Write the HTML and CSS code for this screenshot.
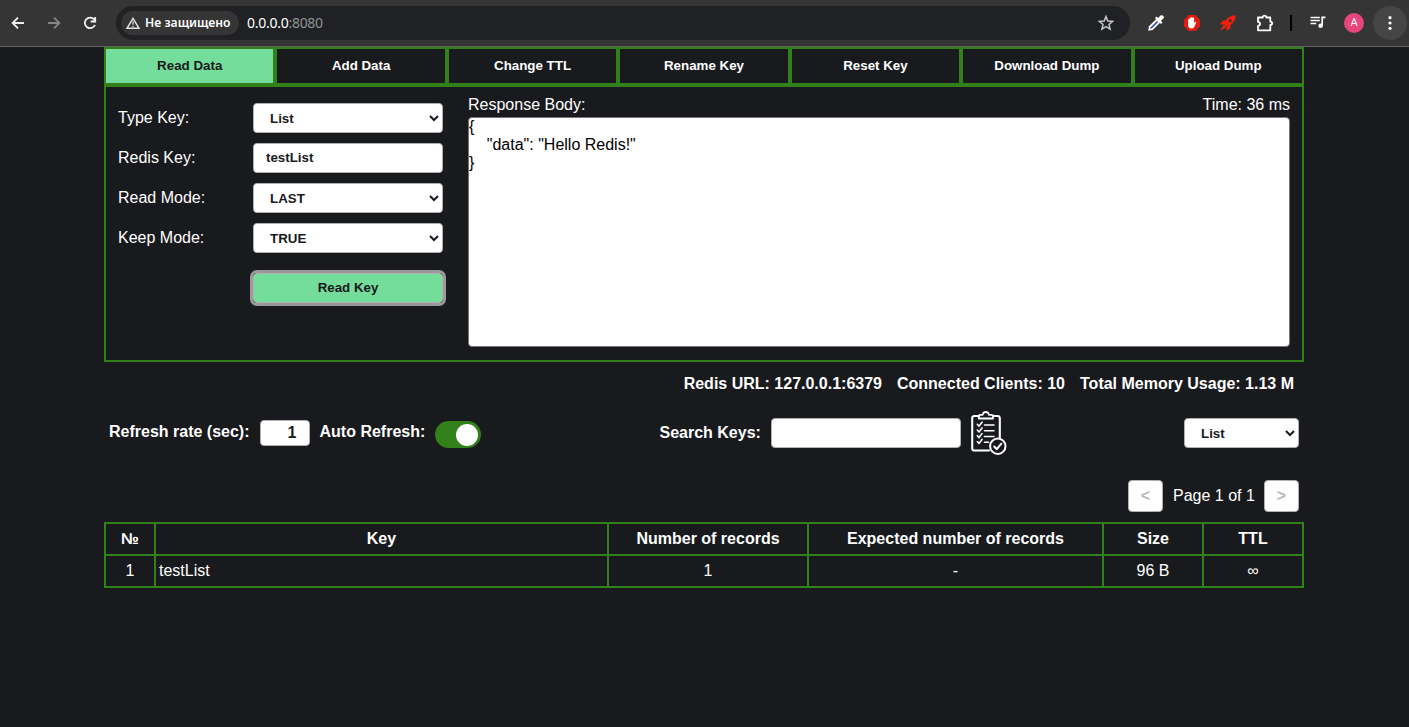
FILE: index.html
```html
<!DOCTYPE html>
<html lang="en">
<head>
<meta charset="utf-8">
<title>Redis</title>
<link rel="stylesheet" href="styles.css">
</head>
<body>
<header class="browser">
  <div class="nav-buttons">
    <svg class="nav-icon" viewBox="0 0 16 16"><path d="M14 8H3M8 2.600 2.600 8 8 13.400"/></svg>
    <svg class="nav-icon nav-icon-dim" viewBox="0 0 16 16"><path d="M2 8h11M8 2.600 13.400 8 8 13.400"/></svg>
    <svg class="nav-icon" viewBox="0 0 16 16"><path d="M13 10a5.300 5.300 0 1 1-.8-5.500L13.300 6M13.200 2v4.500H8.700"/></svg>
  </div>
  <div class="address">
    <span class="security">
      <svg class="warn" viewBox="0 0 14 12"><path d="M7 1.400 13 11.300H1Z" fill="none" stroke="#e3e3e3" stroke-width="1.400"/><path d="M7 4.500v3.300M7 8.700v1.300" stroke="#e3e3e3" stroke-width="1.300"/></svg>
      <span class="security-text">Не защищено</span>
    </span>
    <span class="url">0.0.0.0<span class="port">:8080</span></span>
    <svg class="star" viewBox="0 0 16 16"><path d="M8 1.500 9.800 6l4.900.4L11 9.500l1.100 4.700L8 11.700l-4.100 2.500L5 9.500 1.300 6.400 6.200 6Z" fill="none" stroke="#c7c7c7" stroke-width="1.500"/></svg>
  </div>
  <div class="extensions">
    <svg class="ext" viewBox="0 0 16 16"><path d="M9 3.300 1 11.300.2 15.800l4.500-.8 8-8Z" fill="#fff"/><path d="M8.900 6 2.700 12.200l-.4 1.500 1.600-.3L10.100 7.200Z" fill="#3f51b5"/><path d="m7 3 1.500-1.500 1.800 1.500L12.400.6c2-1.500 4.600 1 3 3l-2.400 2.100 1.500 1.800-1.500 1.500Z" fill="#fff"/></svg>
    <svg class="ext" viewBox="0 0 16 16"><path d="M4.700 0h6.600L16 4.700v6.600L11.300 16H4.700L0 11.300V4.700Z" fill="#e21b12"/><path d="M4.200 8.500V4.600q.7-1 1.400 0V3q.8-.9 1.500 0v-.5q.8-.8 1.500 0V3q.8-.8 1.500 0v5.300l1-1.300q1.200-.5 1.100.5l-2 4.500q-.9 1.600-2.600 1.600-3.400 0-3.400-3Z" fill="#fff"/></svg>
    <svg class="ext" viewBox="0 0 16 16"><path d="M15.800.2C10.800.5 7.900 2.300 6 5.200L2.500 5.800.2 9.500l3.500-.4-1 2.400L.2 15.800l4.500-2.600 2.100-.8-.4 3.300 3.800-2.200.4-3.600C13.600 7.600 15.700 4.500 15.800.2Z" fill="#f5200b"/><circle cx="10.300" cy="5.700" r="1.500" fill="#353535"/><path d="m3.500 12 2.300-2.200M5.500 13l2-1.800" stroke="#353535" stroke-width=".8"/></svg>
    <svg class="ext puzzle" viewBox="0 0 18 18"><path d="M2 3.500h4.700C6.700 1 10.300 1 10.300 3.500h4V7.700c2.500 0 2.500 3.300 0 3.300v5.300H2v-4.500c2.700 0 2.700-4 0-4Z" fill="none" stroke="#fff" stroke-width="1.800" stroke-linejoin="round"/></svg>
    <span class="divider"></span>
    <svg class="ext" viewBox="0 0 16 16"><path d="M.5 2.500h9.300M.5 5.500h9.300M.5 8.500h5.700M12.200 10.500V2.400h3.300" fill="none" stroke="#fff" stroke-width="1.700"/><circle cx="10.600" cy="10.700" r="2.300" fill="#fff"/></svg>
    <span class="avatar">A</span>
  </div>
  <span class="menu"><svg class="dots" viewBox="0 0 4 16"><circle cx="2" cy="2.700" r="1.600"/><circle cx="2" cy="8" r="1.600"/><circle cx="2" cy="13.300" r="1.600"/></svg></span>
</header>
<main class="app">
  <nav class="tabs">
    <button class="tab tab-active">Read Data</button>
    <button class="tab">Add Data</button>
    <button class="tab">Change TTL</button>
    <button class="tab">Rename Key</button>
    <button class="tab">Reset Key</button>
    <button class="tab">Download Dump</button>
    <button class="tab">Upload Dump</button>
  </nav>
  <section class="panel">
    <div class="form">
      <label class="label">Type Key:</label><select class="field"><option>List</option></select>
      <label class="label">Redis Key:</label><input class="field text-field" value="testList">
      <label class="label">Read Mode:</label><select class="field"><option>LAST</option></select>
      <label class="label">Keep Mode:</label><select class="field"><option>TRUE</option></select>
      <button class="read-key">Read Key</button>
    </div>
    <div class="response">
      <div class="response-head"><span>Response Body:</span><span>Time: 36 ms</span></div>
      <textarea class="body-text">{
    "data": "Hello Redis!"
}</textarea>
    </div>
  </section>
  <div class="stats"><span>Redis URL: 127.0.0.1:6379</span><span>Connected Clients: 10</span><span>Total Memory Usage: 1.13 M</span></div>
  <div class="toolbar">
    <div class="refresh">
      <label class="refresh-label">Refresh rate (sec):</label><input class="rate" value="1"><label class="refresh-label">Auto Refresh:</label><span class="toggle"><span class="knob"></span></span>
    </div>
    <div class="search">
      <label>Search Keys:</label><input class="field">
      <svg class="clipboard" viewBox="0 0 36 45" fill="none" stroke="#fff" stroke-linecap="round" stroke-linejoin="round">
        <path d="M8 5H3.500Q1.200 5 1.200 7.300V37.200Q1.200 39.500 3.500 39.500H18M22 5h4.500Q28.800 5 28.800 7.300V26.500" stroke-width="2.100"/>
        <path d="M7.800 7.500V5q0-1.200 1.500-1.200h2.300q.8-2.800 3.200-2.800T18 3.800h2.500Q22 3.800 22 5v2.500Z" stroke-width="1.800"/>
        <path d="m6.300 13.300 1.700 1.900 3-4M6.300 19l1.700 1.900 3-4M6.300 24.700l1.700 1.900 3-4M6.300 30.500l1.700 1.900 3-4M13.500 14H23M13.500 19.700H23M13.500 25.500H23M13.500 31.200h4" stroke-width="1.600"/>
        <circle cx="26.800" cy="35.200" r="7.700" stroke-width="2"/><path d="m23.200 35.500 2.600 2.700 4.500-5.500" stroke-width="2"/>
      </svg>
    </div>
    <select class="field type-filter"><option>List</option></select>
  </div>
  <div class="pager"><button class="page-btn" disabled>&lt;</button><span class="page-label">Page 1 of 1</span><button class="page-btn" disabled>&gt;</button></div>
  <table class="keys">
    <colgroup><col class="c-num"><col class="c-key"><col class="c-records"><col class="c-expected"><col class="c-small"><col class="c-small"></colgroup>
    <tr><th>№</th><th>Key</th><th>Number of records</th><th>Expected number of records</th><th>Size</th><th>TTL</th></tr>
    <tr><td>1</td><td class="key-name">testList</td><td>1</td><td>-</td><td>96 B</td><td>∞</td></tr>
  </table>
</main>
</body>
</html>
```
FILE: styles.css
```css
* { box-sizing: border-box; }
body {
  margin: 0;
  height: 727px;
  overflow: hidden;
  background: #191a1d;
  color: #fff;
  font: 16px/18px "Liberation Sans", Arial, sans-serif;
}
.browser {
  display: flex;
  align-items: center;
  height: 47px;
  padding: 0 2px 0 10px;
  background: #353535;
  border-bottom: 1px solid #636363;
  font-family: "Noto Sans", sans-serif;
}
.nav-buttons { display: flex; gap: 20px; width: 106px; }
.nav-icon { width: 16px; height: 16px; fill: none; stroke: #f1f1f1; stroke-width: 1.8; }
.nav-icon-dim { stroke: #858585; }
.address {
  display: flex;
  align-items: center;
  width: 1014px;
  height: 34px;
  padding: 0 16px 0 5px;
  border-radius: 17px;
  background: #202124;
}
.security {
  display: flex;
  align-items: center;
  gap: 5px;
  width: 118px;
  height: 24px;
  padding-left: 5px;
  border-radius: 12px;
  background: #353535;
}
.warn { width: 14px; height: 12px; }
.security-text { font-size: 12.2px; font-weight: 600; white-space: nowrap; }
.url { flex: 1; padding-left: 8px; font-size: 14px; letter-spacing: -0.27px; }
.port { color: #8f9195; }
.star { width: 16px; height: 16px; }
.extensions { display: flex; align-items: center; padding-left: 18px; width: 243px; }
.ext { width: 16px; height: 16px; margin-right: 20px; flex: none; }
.puzzle { width: 18px; height: 18px; margin: 0 16px 0 0; }
.divider { width: 2px; height: 16px; margin-right: 18px; background: #000; flex: none; }
.avatar {
  width: 20px;
  height: 20px;
  margin-left: -2px;
  border-radius: 50%;
  background: #e8457c;
  font: 11px/20px Roboto, sans-serif;
  text-align: center;
  flex: none;
}
.menu {
  display: flex;
  align-items: center;
  justify-content: center;
  width: 34px;
  height: 34px;
  border-radius: 50%;
  background: #454545;
}
.dots { width: 4px; height: 16px; fill: #fff; }

.app { width: 1200px; margin-left: 104px; }
.tabs { display: grid; grid-template-columns: repeat(7, 1fr); height: 38px; }
.tab {
  padding: 0 0 2px;
  border: 2px solid #32801a;
  background: #191a1d;
  color: #fff;
  font: bold 13.333px "Liberation Sans", Arial, sans-serif;
}
.tab-active { background: #74dd9c; color: #191a1d; }
.panel {
  display: flex;
  gap: 25px;
  height: 277px;
  padding: 8px 12px 0;
  border: 2px solid #32801a;
}
.form {
  display: grid;
  grid-template-columns: 135px 190px;
  grid-auto-rows: 30px;
  row-gap: 10px;
  align-content: start;
  padding-top: 8px;
}
.label { align-self: center; }
.field {
  width: 190px;
  height: 30px;
  padding: 0 12px;
  border: 1px solid #b0b0b0;
  border-radius: 4px;
  background: #fff;
  color: #191a1d;
  font: bold 13.333px "Liberation Sans", Arial, sans-serif;
}
select.field { padding-right: 0; }
.text-field { padding-bottom: 2px; }
.read-key {
  grid-column: 2;
  height: 30px;
  margin-top: 10px;
  padding: 0 0 2px;
  border: 1px solid #b0b0b0;
  border-radius: 4px;
  outline: 3px solid #9a9a9a;
  background: #74dd9c;
  color: #191a1d;
  font: bold 13.333px "Liberation Sans", Arial, sans-serif;
}
.response { width: 822px; }
.response-head { display: flex; justify-content: space-between; height: 22px; padding-top: 1px; }
.body-text {
  display: block;
  width: 822px;
  height: 230px;
  padding: 0;
  border: 1px solid #767676;
  border-radius: 4px;
  background: #fff;
  color: #000;
  font: 16px/18px "Liberation Sans", Arial, sans-serif;
  resize: none;
}
.stats {
  display: flex;
  justify-content: flex-end;
  gap: 15px;
  padding: 13px 10px 0 0;
  font-weight: bold;
}
.toolbar {
  display: flex;
  align-items: center;
  height: 54px;
  margin-top: 13px;
  padding: 0 5px;
  font-weight: bold;
}
.refresh, .search { display: flex; align-items: center; gap: 10px; }
.refresh { width: 550.5px; }
.refresh-label { margin-bottom: 2px; }
.rate {
  width: 50px;
  height: 26px;
  padding: 0 12px 0 0;
  border: 1px solid #b0b0b0;
  border-radius: 4px;
  color: #191a1d;
  font: bold 16px "Liberation Sans", Arial, sans-serif;
  text-align: right;
}
.toggle {
  display: flex;
  align-items: center;
  justify-content: flex-end;
  width: 46px;
  height: 27px;
  margin-top: 3px;
  padding-right: 3px;
  border-radius: 14px;
  background: #32801a;
}
.knob { width: 22px; height: 22px; border-radius: 50%; background: #fff; }
.clipboard { width: 36px; height: 45px; }
.type-filter { width: 115px; margin-left: auto; }
.pager {
  display: flex;
  align-items: center;
  justify-content: flex-end;
  gap: 10px;
  height: 32px;
  margin: 20px 5px 10px;
}
.page-label { width: 81px; white-space: nowrap; }
.page-btn {
  width: 35px;
  height: 32px;
  padding: 0;
  border: 1px solid #b0b0b0;
  border-radius: 4px;
  background: #fff;
  color: #b9b9b9;
  font: bold 16px "Liberation Sans", Arial, sans-serif;
}
.keys { width: 1200px; table-layout: fixed; border-collapse: collapse; text-align: center; }
.keys th, .keys td { height: 32px; padding: 0; border: 2px solid #32801a; }
.keys .key-name { padding-left: 3px; text-align: left; }
.c-num { width: 50px; }
.c-key { width: 453px; }
.c-records { width: 200px; }
.c-expected { width: 295px; }
.c-small { width: 100px; }
```
